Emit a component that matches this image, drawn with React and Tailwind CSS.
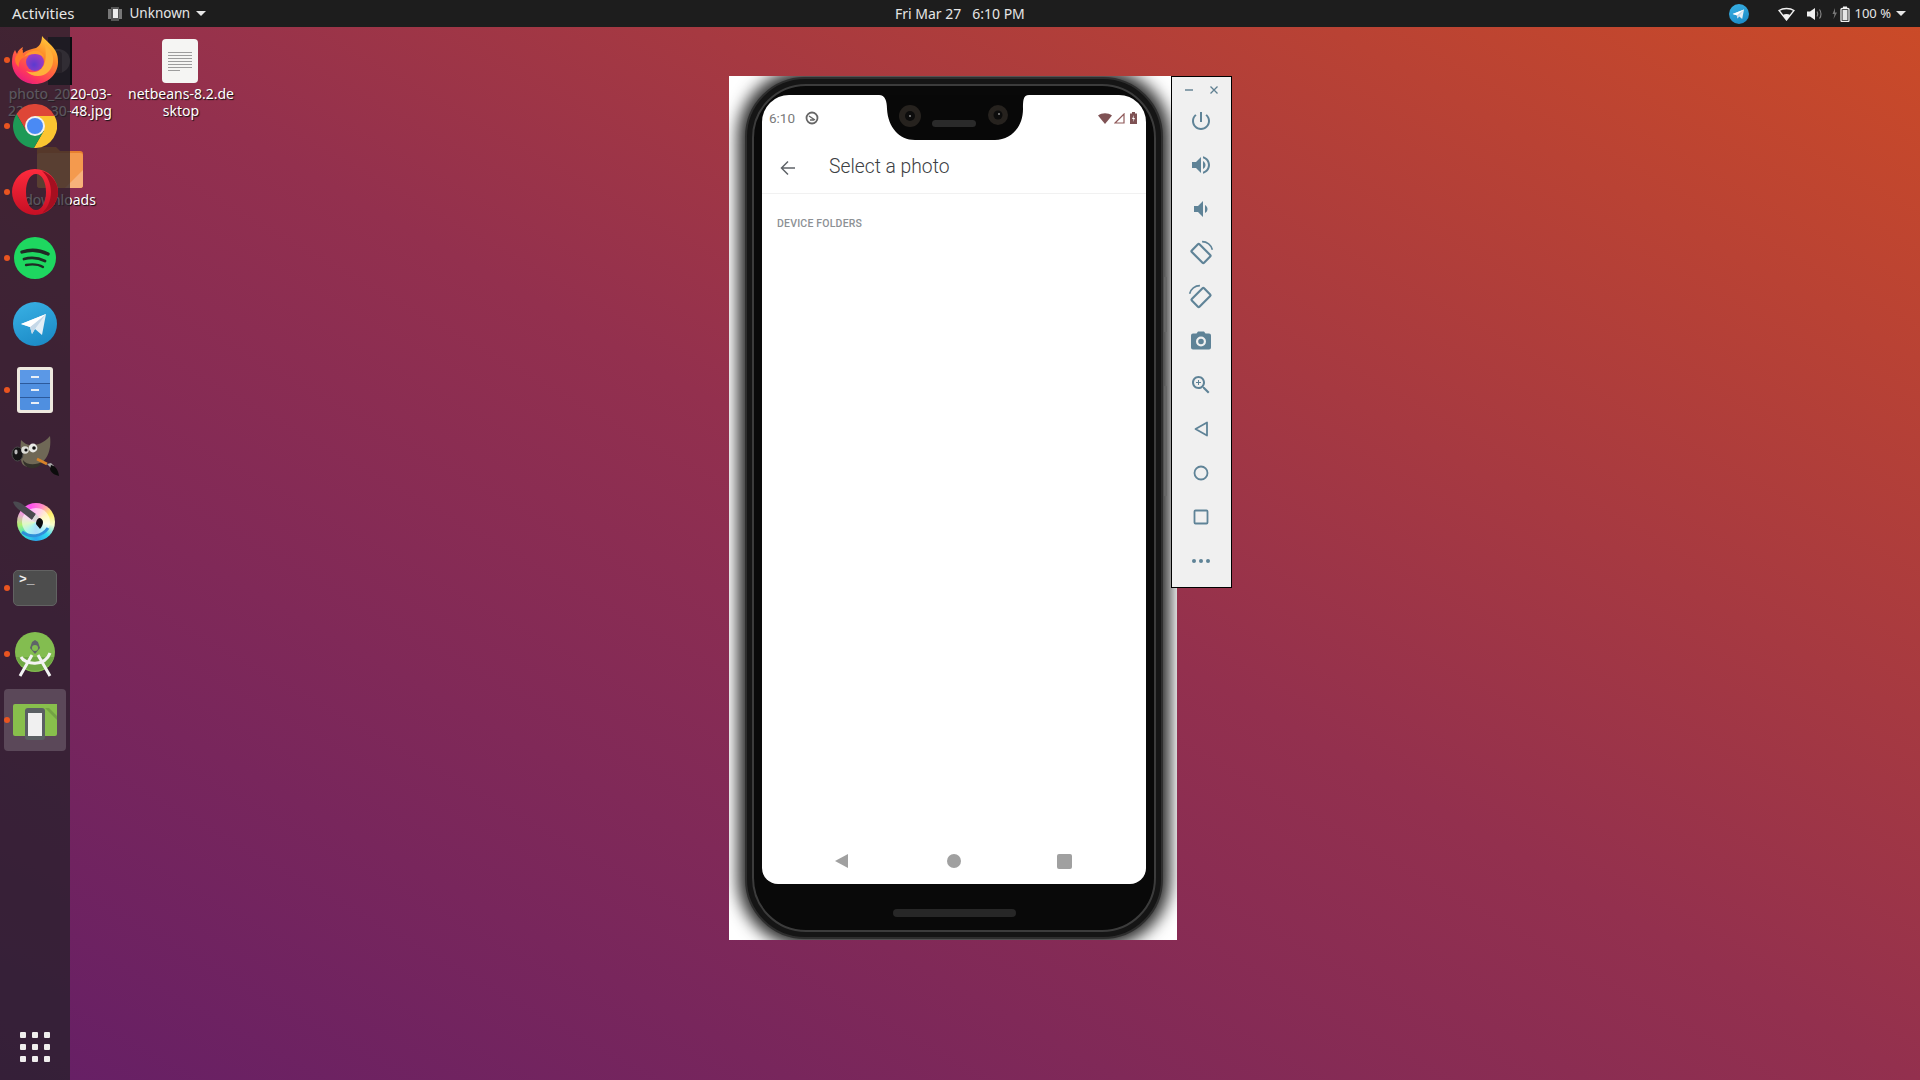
const dockDot = 'absolute left-[4px] top-1/2 -mt-[3px] w-[6px] h-[6px] rounded-full bg-[#e95420]';

function Firefox() {
  return (
    <svg width="48" height="50" viewBox="0 0 48 50">
      <defs>
        <linearGradient id="ffBody" x1="0.8" y1="0" x2="0.2" y2="1">
          <stop offset="0" stopColor="#ffd43b" />
          <stop offset="0.35" stopColor="#ff8a2a" />
          <stop offset="0.75" stopColor="#ff3a5a" />
          <stop offset="1" stopColor="#e31587" />
        </linearGradient>
        <radialGradient id="ffCore" cx="0.45" cy="0.65" r="0.6">
          <stop offset="0" stopColor="#5b3bd0" />
          <stop offset="1" stopColor="#a03bc0" />
        </radialGradient>
      </defs>
      <path d="M31 1c3 4 9 8 13 14 3 5 3 9 3 12 0 12-10 22-23 22S1 39 1 27c0-5 1-9 3-12l2 4c1-4 4-6 6-7-1 3-1 5 0 6 4-3 9-4 13-5 4-2 6-7 6-12z" fill="url(#ffBody)" />
      <path d="M34 10c6 4 9 10 8 17-1 8-7 14-15 14-5 0-9-2-12-5 5 2 11 2 15-2s6-11 4-24z" fill="#ffb03a" />
      <circle cx="24" cy="27" r="9" fill="url(#ffCore)" />
      <path d="M13 22c3-5 9-7 14-6 3 1 5 3 6 6-3-2-6-3-9-3-4 0-8 1-11 3z" fill="#ff9a2e" />
      <path d="M4 24c1-4 4-8 8-9-1 3 0 6 2 7-4 1-7 5-6 10-3-2-4-5-4-8z" fill="#ff7a2a" />
    </svg>
  );
}

function Chrome() {
  return (
    <svg width="44" height="44" viewBox="2 2 44 44">
      <path d="M24 24L15.34 29L5.54 12.03A22 22 0 0 1 43.6 14L24 14Z" fill="#de4637" />
      <path d="M24 24L24 14L43.6 14A22 22 0 0 1 22.86 45.97L32.66 29Z" fill="#fbc531" />
      <path d="M24 24L32.66 29L22.86 45.97A22 22 0 0 1 5.54 12.03L15.34 29Z" fill="#1d9a56" />
      <circle cx="24" cy="24" r="10" fill="#f1f1f1" />
      <circle cx="24" cy="24" r="8" fill="#4a8af4" />
    </svg>
  );
}

function Opera() {
  return (
    <svg width="46" height="46" viewBox="0 0 46 46">
      <defs>
        <linearGradient id="opRed" x1="0" y1="0" x2="0" y2="1">
          <stop offset="0" stopColor="#ff2b3d" />
          <stop offset="1" stopColor="#c60f24" />
        </linearGradient>
      </defs>
      <path fillRule="evenodd" d="M23 0a23 23 0 1 0 0 46 23 23 0 0 0 0-46zM24 5c6 0 10 8 10 18s-4 18-10 18-10-8-10-18S18 5 24 5z" fill="url(#opRed)" />
      <path fillRule="evenodd" d="M30 2c9 3 16 11 16 21s-7 18-16 21c5-4 9-12 9-21S35 6 30 2z" fill="#a50f20" />
    </svg>
  );
}

function Spotify() {
  return (
    <svg width="42" height="42" viewBox="0 0 42 42">
      <circle cx="21" cy="21" r="21" fill="#1ed760" />
      <path d="M8 15c9-3 18-2 26 2" fill="none" stroke="#1f2a24" strokeWidth="3.4" strokeLinecap="round" />
      <path d="M10 22c7-2 15-1 21 2" fill="none" stroke="#1f2a24" strokeWidth="2.8" strokeLinecap="round" />
      <path d="M12 28c6-1 12-1 17 2" fill="none" stroke="#1f2a24" strokeWidth="2.3" strokeLinecap="round" />
    </svg>
  );
}

function Telegram({ size = 44 }) {
  return (
    <svg width={size} height={size} viewBox="0 0 44 44">
      <defs>
        <linearGradient id={`tg${size}`} x1="0.3" y1="0" x2="0.7" y2="1">
          <stop offset="0" stopColor="#37aee2" />
          <stop offset="1" stopColor="#1b8ac6" />
        </linearGradient>
      </defs>
      <circle cx="22" cy="22" r="22" fill={`url(#tg${size})`} />
      <path d="M8 22L33 12L29 33L22 27L19 32L17 25Z" fill="#e3eef6" />
      <path d="M17 25L33 12L22 27L19 32Z" fill="#c5d8e8" />
      <path d="M8 22L33 12L17 25Z" fill="#ffffff" />
    </svg>
  );
}

function FileCabinet() {
  return (
    <svg width="36" height="46" viewBox="0 0 36 46">
      <rect x="0" y="0" width="36" height="46" rx="3" fill="#eee9df" />
      <rect x="3" y="3" width="30" height="40" rx="1" fill="#4f8fe0" />
      <rect x="3" y="3" width="30" height="13" fill="#5b98e6" />
      <rect x="3" y="16" width="30" height="1" fill="#2c5a9c" />
      <rect x="3" y="30" width="30" height="1" fill="#2c5a9c" />
      <rect x="14" y="9" width="8" height="2" fill="#e8eef6" />
      <rect x="14" y="22" width="8" height="2" fill="#e8eef6" />
      <rect x="14" y="35" width="8" height="2" fill="#e8eef6" />
    </svg>
  );
}

function Gimp() {
  return (
    <svg width="48" height="44" viewBox="0 0 48 44">
      <path d="M10 6c3 3 6 5 10 5 6 0 12-1 19-9 1 8 0 16-4 22-4 6-10 9-16 9-6 0-9-3-9-8 0-6-1-12 0-19z" fill="#6f6856" />
      <path d="M12 26c3 5 13 6 20 1-3 6-8 8-13 7-4-1-7-4-7-8z" fill="#33312a" />
      <ellipse cx="6.5" cy="20" rx="5.5" ry="7" fill="#151515" stroke="#4a4a4a" />
      <ellipse cx="5" cy="18" rx="1.6" ry="2.4" fill="#bbb" />
      <circle cx="22" cy="14" r="4.4" fill="#e8e8e4" />
      <circle cx="23" cy="14" r="1.8" fill="#111" />
      <circle cx="14" cy="16" r="3.8" fill="#dcdcd6" />
      <circle cx="15" cy="16" r="1.6" fill="#111" />
      <path d="M26 25L36 30" stroke="#d9832a" strokeWidth="2.6" />
      <path d="M36 30l4-1 3 3-3 2z" fill="#aaa" />
      <path d="M40 31c4 1 7 4 8 11-4-1-8-3-9-7z" fill="#0c0c0c" />
    </svg>
  );
}

function Krita() {
  return (
    <div className="relative w-[38px] h-[38px] ml-[1px]">
      <div className="w-full h-full rounded-full bg-[conic-gradient(from_-20deg,#ff4ff0,#ff8ac8,#fff06a,#f8ffd0,#30d8f0,#2aa8f0,#30e0d8,#b0f070,#f0a0e0,#ff4ff0)]" />
      <div className="absolute left-[5px] top-[5px] w-[28px] h-[28px] rounded-full bg-white/60" />
      <svg className="absolute -left-[4px] -top-[2px]" width="46" height="46" viewBox="0 0 46 46">
        <path d="M9 31c8 6 20 5 26-4" fill="none" stroke="#2f8fd8" strokeWidth="3" />
        <path d="M0 1c3-1 6 0 9 2l14 10-4 6L5 8C3 6 1 4 0 1z" fill="#4a4a50" />
        <path d="M23 13l3 3-4 5-3-2z" fill="#d8d8d8" />
        <path d="M26 17c2 0 4 2 4 4s-1 5-3 7c-1-2-3-3-4-5 0-3 1-5 3-6z" fill="#0e0e12" />
      </svg>
    </div>
  );
}

function Terminal() {
  return (
    <div className="w-[44px] h-[36px] rounded-[5px] bg-[#4d4d4d] border border-[#626262] px-[5px] font-['Liberation_Mono',monospace] text-[13px] leading-[18px] font-bold text-[#f0f0f0]">
      {'>_'}
    </div>
  );
}

function AndroidStudio() {
  return (
    <svg width="44" height="46" viewBox="0 0 44 46">
      <circle cx="22" cy="21" r="20" fill="#83bd50" />
      <path d="M3 26h38a20 20 0 0 1-38 0z" fill="#6fa843" />
      <path d="M19 11l3-2 3 2 2 6-5 6-5-6z" fill="#5f6468" />
      <circle cx="22" cy="17" r="3" fill="#83bd50" />
      <path d="M19 24L7 45M25 24l12 21" stroke="#f3f3f3" strokeWidth="3" fill="none" />
      <path d="M8 26c4 8 24 10 29-4" stroke="#f3f3f3" strokeWidth="3" fill="none" />
    </svg>
  );
}

function Emulator() {
  return (
    <svg width="44" height="44" viewBox="0 0 44 44">
      <rect x="0" y="6" width="44" height="32" rx="2" fill="#88bf4c" />
      <path d="M31 9l13 13V6H31z" fill="#88bf4c" />
      <path d="M32 10l12 12v-4L36 10z" fill="#73a244" />
      <rect x="12" y="10" width="20" height="32" rx="3" fill="#5a5f63" />
      <rect x="15" y="15" width="14" height="23" fill="#f0f0f0" />
    </svg>
  );
}

const dockItems = [
  { icon: <Firefox />, running: true },
  { icon: <Chrome />, running: true },
  { icon: <Opera />, running: true },
  { icon: <Spotify />, running: true },
  { icon: <Telegram />, running: false },
  { icon: <FileCabinet />, running: true },
  { icon: <Gimp />, running: false },
  { icon: <Krita />, running: false },
  { icon: <Terminal />, running: true },
  { icon: <AndroidStudio />, running: true },
  { icon: <Emulator />, running: true, active: true },
];

function Dock() {
  return (
    <div className="relative z-10 flex flex-col w-[70px] flex-1 bg-[#26202a]/75">
      {dockItems.map((item, i) => (
        <div key={i} className="relative h-[66px] flex items-center justify-center">
          {item.active && <div className="absolute left-[4px] top-[2px] w-[62px] h-[62px] rounded-[4px] bg-[#5b4859]" />}
          <div className="relative">{item.icon}</div>
          {item.running && <div className={dockDot} />}
        </div>
      ))}
      <div className="mt-auto h-[66px] flex items-center justify-center">
        <div className="grid grid-cols-3 gap-[6px]">
          {[0, 1, 2, 3, 4, 5, 6, 7, 8].map((n) => (
            <div key={n} className="w-[6px] h-[6px] rounded-[1px] bg-[#f0eeee]" />
          ))}
        </div>
      </div>
    </div>
  );
}

function TopBar() {
  return (
    <div className="relative flex items-center h-[27px] bg-[#1d1d1d] text-[#e6e6e6] text-[14px] shrink-0 z-20">
      <span className="ml-[12px] text-[15px]">Activities</span>
      <svg className="ml-[33px]" width="15" height="14" viewBox="0 0 15 14">
        <rect x="0" y="2" width="14" height="10" fill="#777" />
        <rect x="3" y="0" width="8" height="14" fill="#555" />
        <rect x="5" y="2" width="5" height="9" fill="#eee" />
      </svg>
      <span className="ml-[7px] text-[13.5px]">Unknown</span>
      <div className="ml-[6px] w-0 h-0 border-x-[5px] border-x-transparent border-t-[5px] border-t-[#e6e6e6]" />
      <div className="absolute left-[895px] top-0 h-full flex items-center whitespace-pre">Fri Mar 27   6:10 PM</div>
      <div className="ml-auto flex items-center pr-[14px]">
        <Telegram size={20} />
        <svg className="ml-[29px]" width="17" height="14" viewBox="0 0 17 14">
          <path d="M1 3.5C5 0.8 12 0.8 16 3.5L8.5 13z" fill="none" stroke="#f0f0f0" strokeWidth="1.4" />
          <path d="M4.8 8L8.5 13 12.2 8C10 6.8 7 6.8 4.8 8z" fill="#f0f0f0" />
        </svg>
        <svg className="ml-[12px]" width="16" height="14" viewBox="0 0 16 14">
          <path d="M0 4.5h3L8 1v12L3 9.500H0z" fill="#f0f0f0" />
          <path d="M10 4.500c1 1.500 1 3.500 0 5M12.500 2.500c2 2.500 2 6.500 0 9" stroke="#8a8a8a" strokeWidth="1.100" fill="none" />
        </svg>
        <svg className="ml-[9px]" width="18" height="16" viewBox="0 0 18 16">
          <path d="M3 2L0.500 8H2.500L1.500 13L5 6.500H3z" fill="#777" />
          <rect x="9" y="2.500" width="8" height="13" rx="1" fill="none" stroke="#f0f0f0" strokeWidth="1.300" />
          <rect x="11" y="0.500" width="4" height="2" fill="#f0f0f0" />
          <rect x="10.500" y="4" width="5" height="10" fill="#e5e5e5" />
        </svg>
        <span className="ml-[5px] whitespace-pre text-[13px]">100 %</span>
        <div className="ml-[5px] w-0 h-0 border-x-[5px] border-x-transparent border-t-[5px] border-t-[#e6e6e6]" />
      </div>
    </div>
  );
}

const labelCls = "text-center text-white text-[14px] leading-[17px] [text-shadow:1px_1px_1px_#111] break-all";

function DesktopIcons() {
  return (
    <>
      <div className="absolute left-[4px] top-[37px] w-[112px] flex flex-col items-center">
        <div className="relative w-[24px] h-[48px] ml-[0px] bg-[#0b0d10] overflow-hidden">
          <div className="absolute left-[-2px] top-[12px] w-[24px] h-[24px] rounded-full bg-[#555]" />
          <div className="absolute left-[5px] top-[14px] w-[9px] h-[22px] rounded-t-[4px] bg-[#2c2a2a]" />
        </div>
        <div className={labelCls}>
          photo_2020-03-
          <br />
          22_18-30-48.jpg
        </div>
      </div>
      <div className="absolute left-[122px] top-[39px] w-[116px] flex flex-col items-center">
        <div className="relative w-[36px] h-[44px] rounded-[4px] bg-[#f5f5f3] flex flex-col gap-[2px] px-[6px] pt-[13px]">
          {[0, 1, 2, 3, 4, 5].map((n) => (
            <div key={n} className="h-[1px] w-full bg-[#9d9d9d]" />
          ))}
          <div className="h-[1px] w-[12px] bg-[#9d9d9d]" />
        </div>
        <div className={labelCls + ' mt-[2px] w-[112px] ml-[2px]'}>
          netbeans-8.2.de
          <br />
          sktop
        </div>
      </div>
      <div className="absolute left-[10px] top-[146px] w-[100px] flex flex-col items-center">
        <svg width="46" height="42" viewBox="0 0 46 42">
          <path d="M0 4a3 3 0 0 1 3-3h16l4 4h20a3 3 0 0 1 3 3v31a3 3 0 0 1-3 3H3a3 3 0 0 1-3-3z" fill="#e8802f" />
          <path d="M0 10a3 3 0 0 1 3-3h40a3 3 0 0 1 3 3v29a3 3 0 0 1-3 3H3a3 3 0 0 1-3-3z" fill="#f49a4e" />
          <path d="M46 24v15a3 3 0 0 1-3 3H28z" fill="#f7b27a" />
        </svg>
        <div className={labelCls + ' mt-[3px]'}>downloads</div>
      </div>
    </>
  );
}

function Phone() {
  return (
    <div className="absolute left-[729px] top-[76px] w-[448px] h-[864px] bg-white overflow-hidden pl-[16px] pt-[1px]">
      <div className="relative w-[418px] h-[862px] rounded-[60px] border-2 border-[#2e2e2e] bg-[#151515] p-[5px] shadow-[0_0_16px_7px_rgba(0,0,0,0.85)]">
        <div className="w-full h-full rounded-[54px] border-2 border-[#3c3c3c] bg-[#090909] px-[8px] pt-[9px] pb-[46px]">
          <div className="relative flex flex-col h-full rounded-t-[27px] rounded-b-[16px] bg-white overflow-hidden font-['Roboto',sans-serif]">
            <div className="flex items-center justify-between h-[46px] pl-[7px] pr-[9px] shrink-0">
              <div className="flex items-center text-[13.5px] text-[#7a7a7a]">
                6:10
                <svg className="ml-[10px]" width="14" height="14" viewBox="0 0 14 14">
                  <circle cx="7" cy="7" r="5.500" fill="none" stroke="#666" strokeWidth="1.800" />
                  <path d="M4 5l6 4M5 9h4" stroke="#666" strokeWidth="1.500" />
                </svg>
              </div>
              <div className="flex items-center gap-[2px]">
                <svg width="14" height="11" viewBox="0 0 14 11">
                  <path d="M0 2.500C4-.5 10-.5 14 2.500L7 11z" fill="#7f5254" />
                </svg>
                <svg width="11" height="11" viewBox="0 0 11 11">
                  <path d="M1 10L10 1v9z" fill="none" stroke="#8f5a5a" strokeWidth="1.200" />
                </svg>
                <svg className="ml-[3px]" width="7" height="12" viewBox="0 0 7 12">
                  <path d="M2 0h3v1.500h2V12H0V1.500h2z" fill="#7f5254" />
                  <path d="M4 3L2 7h1.500L3 10l2-4H3.500z" fill="#fff" />
                </svg>
              </div>
            </div>
            <div className="flex items-center h-[53px] pt-[1px] border-b border-[#f1f1f1] shrink-0 text-[#3c4043]">
              <svg className="ml-[16px]" width="20" height="20" viewBox="0 0 20 20">
                <path d="M17 10H4M10 3.500L3.500 10l6.500 6.500" fill="none" stroke="#5f6368" strokeWidth="1.500" />
              </svg>
              <span className="ml-[31px] text-[19.3px] font-light">Select a photo</span>
            </div>
            <div className="flex-1 px-[15px] pt-[23px] text-[10.5px] leading-[13px] font-medium text-[#8d9195] tracking-[0.2px]">
              DEVICE FOLDERS
            </div>
            <div className="relative h-[44px] pb-[2px] shrink-0 flex items-center">
              <div className="ml-[73px] w-0 h-0 border-y-[7.5px] border-y-transparent border-r-[13px] border-r-[#a0a0a0]" />
              <div className="ml-[99px] w-[14px] h-[14px] rounded-full bg-[#a0a0a0]" />
              <div className="ml-[96px] w-[15px] h-[15px] rounded-[2px] bg-[#a0a0a0]" />
            </div>
            <svg className="absolute left-[117px] top-0" width="150" height="46" viewBox="0 0 150 46">
              <path d="M0 0H150C144 0 144 6 144 14 144 32 132 45 116 45H36C20 45 9 32 8 14 8 6 6 0 0 0z" fill="#080808" />
              <circle cx="31" cy="21" r="11" fill="#26221e" />
              <circle cx="31" cy="21" r="5" fill="#0c0c0c" />
              <circle cx="31" cy="21" r="1" fill="#8a8a8a" />
              <circle cx="119" cy="20" r="10" fill="#26221e" />
              <circle cx="119" cy="20" r="4.500" fill="#0c0c0c" />
              <circle cx="120" cy="19" r="1" fill="#8a8a8a" />
              <rect x="53" y="25" width="44" height="7" rx="3.500" fill="#2a2a2a" />
            </svg>
          </div>
        </div>
        <div className="absolute left-[146px] bottom-[20px] w-[123px] h-[8px] rounded-[4px] bg-[#272727]" />
        <div className="absolute right-[-6px] top-[198px] w-[3px] h-[55px] bg-[#666]" />
        <div className="absolute right-[-6px] top-[307px] w-[3px] h-[110px] bg-[#666]" />
      </div>
    </div>
  );
}

const toolColor = '#5f8397';

function ToolIcon({ children, size = 24 }) {
  return (
    <div className="h-[44px] flex items-center justify-center">
      <svg width={size} height={size} viewBox="0 0 24 24" fill={toolColor} className="overflow-visible">
        {children}
      </svg>
    </div>
  );
}

function Toolbar() {
  return (
    <div className="absolute left-[1171px] top-[76px] w-[61px] h-[512px] pr-px bg-[#f0f0f0] border border-black z-10 flex flex-col">
      <div className="flex items-center justify-between h-[24px] mt-[1px] pl-[13px] pr-[11px] shrink-0">
        <div className="w-[8px] h-[1.500px] bg-[#8aa0ac]" />
        <svg width="10" height="10" viewBox="0 0 10 10">
          <path d="M1.500 1.500l7 7M8.500 1.500l-7 7" stroke="#5f7f91" strokeWidth="1.300" />
        </svg>
      </div>
      <div className="flex flex-col mt-[-3px]">
        <ToolIcon>
          <path d="M13 3h-2v10h2V3zm4.830 2.170l-1.420 1.420C17.990 7.860 19 9.810 19 12c0 3.870-3.130 7-7 7s-7-3.130-7-7c0-2.190 1.010-4.140 2.580-5.420L6.170 5.170C4.230 6.820 3 9.260 3 12c0 4.970 4.030 9 9 9s9-4.030 9-9c0-2.740-1.230-5.180-3.170-6.830z" />
        </ToolIcon>
        <ToolIcon>
          <path d="M3 9v6h4l5 5V4L7 9H3zm13.500 3c0-1.770-1.020-3.290-2.500-4.030v8.050c1.480-.73 2.500-2.250 2.500-4.020zM14 3.230v2.060c2.890.86 5 3.540 5 6.710s-2.110 5.850-5 6.710v2.060c4.010-.91 7-4.490 7-8.770s-2.990-7.860-7-8.770z" />
        </ToolIcon>
        <ToolIcon>
          <path d="M18.500 12c0-1.770-1.020-3.290-2.500-4.030v8.050c1.480-.73 2.500-2.250 2.500-4.020zM5 9v6h4l5 5V4L9 9H5z" />
        </ToolIcon>
        <ToolIcon size={26}>
          <rect x="4" y="7.500" width="16" height="10" rx="1" transform="rotate(45 12 12.500)" fill="none" stroke={toolColor} strokeWidth="2" />
          <path d="M13 1.500c4.500 0 8.500 3 9.500 7.500" fill="none" stroke={toolColor} strokeWidth="1.500" />
        </ToolIcon>
        <ToolIcon size={26}>
          <rect x="4" y="7.500" width="16" height="10" rx="1" transform="rotate(-45 12 12.500)" fill="none" stroke={toolColor} strokeWidth="2" />
          <path d="M11 1.500c-4.500 0-8.500 3-9.500 7.500" fill="none" stroke={toolColor} strokeWidth="1.500" />
        </ToolIcon>
        <ToolIcon>
          <path fillRule="evenodd" d="M9 2.500L7.500 4.500H4a2 2 0 0 0-2 2v12a2 2 0 0 0 2 2h16a2 2 0 0 0 2-2v-12a2 2 0 0 0-2-2h-3.500L15 2.500H9zm3 15a5 5 0 1 1 0-10 5 5 0 0 1 0 10zm0-2.200a2.800 2.800 0 1 0 0-5.600 2.800 2.800 0 0 0 0 5.600z" />
        </ToolIcon>
        <ToolIcon>
          <path d="M15.500 14h-.79l-.28-.27C15.410 12.590 16 11.110 16 9.500 16 5.910 13.090 3 9.500 3S3 5.910 3 9.500 5.910 16 9.500 16c1.610 0 3.090-.59 4.230-1.570l.27.28v.79l5 4.990L20.490 19l-4.990-5zm-6 0C7.010 14 5 11.990 5 9.500S7.010 5 9.500 5 14 7.010 14 9.500 11.990 14 9.500 14z M12 10h-2v2H9v-2H7V9h2V7h1v2h2v1z" />
        </ToolIcon>
        <ToolIcon>
          <path d="M18 5.500v13L6.500 12z" fill="none" stroke={toolColor} strokeWidth="1.800" strokeLinejoin="round" />
        </ToolIcon>
        <ToolIcon>
          <circle cx="12" cy="12" r="6.500" fill="none" stroke={toolColor} strokeWidth="1.800" />
        </ToolIcon>
        <ToolIcon>
          <rect x="5.500" y="5.500" width="13" height="13" rx="1" fill="none" stroke={toolColor} strokeWidth="1.800" />
        </ToolIcon>
        <ToolIcon>
          <circle cx="5" cy="12" r="2" />
          <circle cx="12" cy="12" r="2" />
          <circle cx="19" cy="12" r="2" />
        </ToolIcon>
      </div>
    </div>
  );
}

export default function App() {
  return (
    <div className="relative flex flex-col w-[1920px] h-[1080px] overflow-hidden bg-[linear-gradient(to_top_right,#651f66,#93304e,#cc4b27)] font-['Noto_Sans',sans-serif]">
      <TopBar />
      <DesktopIcons />
      <Dock />
      <Phone />
      <Toolbar />
    </div>
  );
}
